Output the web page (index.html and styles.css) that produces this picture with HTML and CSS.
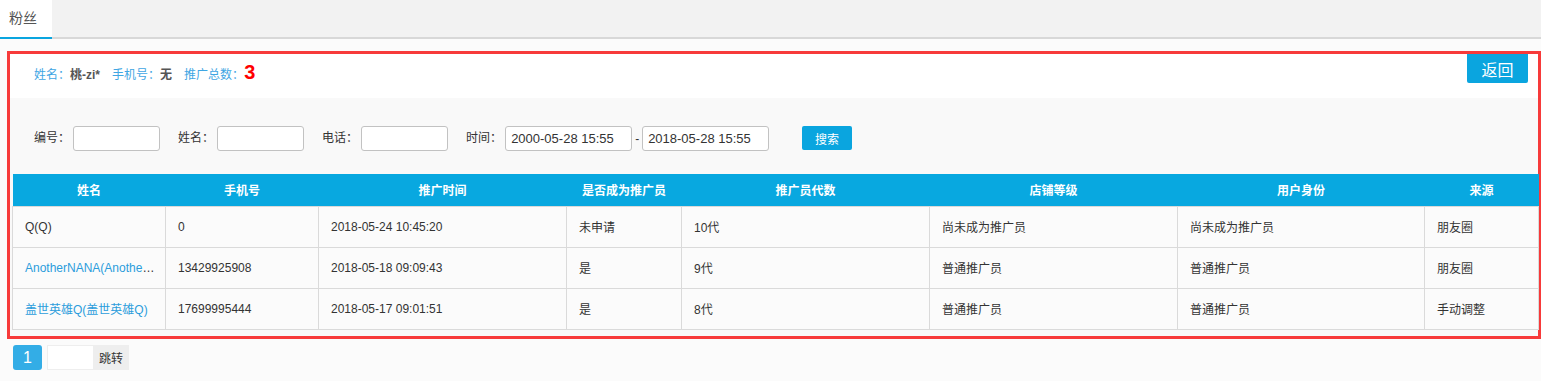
FILE: index.html
```html
<!DOCTYPE html>
<html lang="zh-CN">
<head>
<meta charset="utf-8">
<title>粉丝</title>
<link rel="stylesheet" href="styles.css">
</head>
<body>
<div class="tabs">
  <div class="tab active">粉丝</div>
</div>
<div class="main">
  <section class="panel">
    <div class="info">
      <div class="info-text">
        <span class="item"><span class="k">姓名<span class="colon">：</span></span><span class="v">桃-zi*</span></span>
        <span class="item"><span class="k">手机号<span class="colon">：</span></span><span class="v">无</span></span>
        <span class="item"><span class="k">推广总数<span class="colon">：</span></span><span class="num">3</span></span>
      </div>
      <button class="back">返回</button>
    </div>
    <div class="body">
      <div class="filters">
        <label class="field"><span class="lbl">编号<span class="colon">：</span></span><input class="inp" type="text"></label>
        <label class="field"><span class="lbl">姓名<span class="colon">：</span></span><input class="inp" type="text"></label>
        <label class="field"><span class="lbl">电话<span class="colon">：</span></span><input class="inp" type="text"></label>
        <div class="field">
          <span class="lbl">时间<span class="colon">：</span></span><input class="inp date" type="text" value="2000-05-28 15:55"><span class="dash">-</span><input class="inp date" type="text" value="2018-05-28 15:55">
        </div>
        <button class="search">搜索</button>
      </div>
      <table class="grid">
        <colgroup>
          <col class="c1"><col class="c2"><col class="c3"><col class="c4"><col class="c5"><col class="c6"><col class="c7"><col class="c8">
        </colgroup>
        <thead>
          <tr><th>姓名</th><th>手机号</th><th>推广时间</th><th>是否成为推广员</th><th>推广员代数</th><th>店铺等级</th><th>用户身份</th><th>来源</th></tr>
        </thead>
        <tbody>
          <tr><td>Q(Q)</td><td>0</td><td>2018-05-24 10:45:20</td><td>未申请</td><td>10代</td><td>尚未成为推广员</td><td>尚未成为推广员</td><td>朋友圈</td></tr>
          <tr><td><a class="link">AnotherNANA(AnotherNANA)</a></td><td>13429925908</td><td>2018-05-18 09:09:43</td><td>是</td><td>9代</td><td>普通推广员</td><td>普通推广员</td><td>朋友圈</td></tr>
          <tr><td><a class="link">盖世英雄Q(盖世英雄Q)</a></td><td>17699995444</td><td>2018-05-17 09:01:51</td><td>是</td><td>8代</td><td>普通推广员</td><td>普通推广员</td><td>手动调整</td></tr>
        </tbody>
      </table>
    </div>
  </section>
  <div class="pager">
    <span class="page cur">1</span>
    <input class="jump-inp" type="text">
    <button class="jump">跳转</button>
  </div>
</div>
</body>
</html>
```
FILE: styles.css
```css
* { box-sizing: border-box; }
html, body { margin: 0; padding: 0; }
body {
  background: #fbfbfb;
  font-family: "Liberation Sans", Arial, "Noto Sans CJK SC", sans-serif;
  font-size: 12px;
  color: #333;
  width: 1541px;
  height: 381px;
  overflow: hidden;
}
.colon {
  font-family: "Noto Sans CJK TC", "Noto Sans CJK SC", sans-serif;
  line-height: 1;
}
.tabs {
  display: flex;
  align-items: flex-start;
  height: 39px;
  background: #f2f2f2;
  border-bottom: 2px solid #d8d8d8;
}
.tab {
  width: 52px;
  height: 39px;
  margin-bottom: -2px;
  padding-left: 9px;
  line-height: 37px;
  font-size: 14px;
  color: #555;
  background: #fff;
  border-bottom: 2px solid #0aa5df;
}
.main {
  padding: 12px 0 0 7px;
}
.panel {
  width: 1534px;
  border: 3px solid #f73a3a;
  background: #fff;
}
.info {
  display: flex;
  justify-content: space-between;
  align-items: flex-start;
  height: 44px;
  background: #fff;
}
.info-text {
  padding: 8px 0 0 24px;
  height: 44px;
  line-height: 20px;
  display: flex;
  align-items: baseline;
}
.item { margin-right: 12px; }
.k { color: #3fa6e3; }
.v { color: #555; font-weight: bold; }
.num { color: #ff0000; font-weight: bold; font-size: 20px; }
.back {
  width: 61px;
  height: 29px;
  margin-right: 10px;
  border: 0;
  border-radius: 0 0 2px 2px;
  background: #0aa5df;
  color: #fff;
  font-family: inherit;
  font-size: 16px;
  padding: 0;
}
.body {
  background: #f9f9f9;
  padding: 0 0 6px 2px;
}
.filters {
  display: flex;
  align-items: flex-start;
  height: 76px;
  padding: 28px 0 0 22px;
}
.field {
  display: flex;
  align-items: center;
  height: 25px;
  margin-right: 18px;
}
.lbl { margin-right: 3px; height: 25px; line-height: 25px; }
.inp {
  width: 87px;
  height: 25px;
  border: 1px solid #c2c2c2;
  border-radius: 3px;
  background: #fff;
  padding: 0 5px;
  font-family: inherit;
  font-size: 13px;
  color: #333;
  outline: none;
}
.inp.date { width: 127px; }
.dash { margin: 0 3px; }
.search {
  margin-left: 15px;
  width: 50px;
  height: 24px;
  border: 0;
  border-radius: 2px;
  background: #0aa5df;
  color: #fff;
  font-family: inherit;
  font-size: 12px;
  padding: 0;
}
.grid {
  width: 1526px;
  table-layout: fixed;
  border-collapse: collapse;
}
.c1 { width: 153px; }
.c2 { width: 153px; }
.c3 { width: 248px; }
.c4 { width: 115px; }
.c5 { width: 248px; }
.c6 { width: 248px; }
.c7 { width: 247px; }
.c8 { width: 114px; }
.grid th {
  height: 32px;
  padding: 0;
  background: #08a8e0;
  color: #fff;
  font-weight: bold;
  text-align: center;
  border: 0;
}
.grid td {
  height: 41px;
  padding: 0 9px 0 12px;
  background: #fbfbfb;
  border: 1px solid #dadada;
  white-space: nowrap;
  overflow: hidden;
  text-overflow: ellipsis;
  color: #333;
}
.link { color: #2b9ddb; text-decoration: none; }
.pager {
  display: flex;
  align-items: stretch;
  margin: 6px 0 0 6px;
  height: 25px;
}
.page {
  width: 29px;
  border-radius: 3px;
  background: #33ade6;
  color: #fff;
  font-size: 16px;
  text-align: center;
  line-height: 25px;
}
.jump-inp {
  width: 46px;
  margin-left: 5px;
  border: 1px solid #eeeeee;
  border-right: 0;
  background: #fff;
  outline: none;
}
.jump {
  width: 36px;
  border: 0;
  background: #eeeeee;
  color: #333;
  font-family: inherit;
  font-size: 12px;
  padding: 0;
}
```
